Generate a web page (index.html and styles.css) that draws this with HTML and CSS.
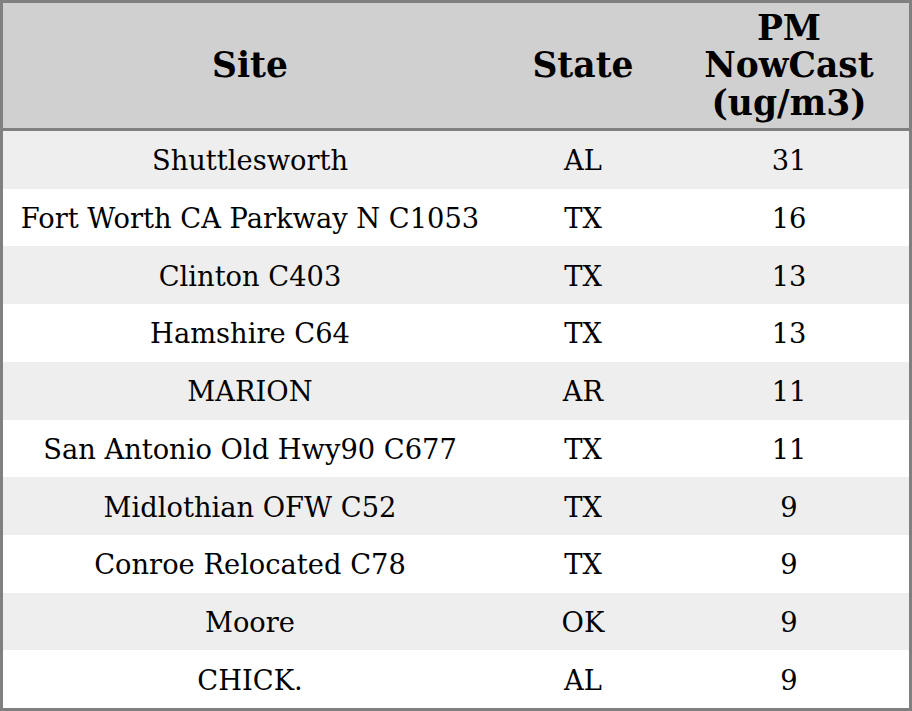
FILE: index.html
```html
<!DOCTYPE html>
<html>
<head>
<meta charset="utf-8">
<link rel="stylesheet" href="styles.css">
</head>
<body>
<div class="table">
  <div class="th">Site</div>
  <div class="th">State</div>
  <div class="th">PM<br>NowCast<br>(ug/m3)</div>

  <div class="td odd">Shuttlesworth</div><div class="td odd">AL</div><div class="td odd">31</div>
  <div class="td">Fort Worth CA Parkway N C1053</div><div class="td">TX</div><div class="td">16</div>
  <div class="td odd">Clinton C403</div><div class="td odd">TX</div><div class="td odd">13</div>
  <div class="td">Hamshire C64</div><div class="td">TX</div><div class="td">13</div>
  <div class="td odd">MARION</div><div class="td odd">AR</div><div class="td odd">11</div>
  <div class="td">San Antonio Old Hwy90 C677</div><div class="td">TX</div><div class="td">11</div>
  <div class="td odd">Midlothian OFW C52</div><div class="td odd">TX</div><div class="td odd">9</div>
  <div class="td">Conroe Relocated C78</div><div class="td">TX</div><div class="td">9</div>
  <div class="td odd">Moore</div><div class="td odd">OK</div><div class="td odd">9</div>
  <div class="td">CHICK.</div><div class="td">AL</div><div class="td">9</div>
</div>
</body>
</html>
```
FILE: styles.css
```css
html, body {
  margin: 0;
  padding: 0;
  background: #fff;
}
.table {
  box-sizing: border-box;
  width: 912px;
  height: 711px;
  border: 3px solid #808080;
  display: grid;
  grid-template-columns: 494px 172px 240px;
  grid-template-rows: 128px repeat(10, 1fr);
  font-family: "DejaVu Serif", serif;
  color: #000;
}
.th {
  box-sizing: border-box;
  background: #d0d0d0;
  border-bottom: 3px solid #808080;
  font-weight: bold;
  font-size: 34.5px;
  line-height: 37.5px;
  padding-top: 1px;
  display: flex;
  align-items: center;
  justify-content: center;
  text-align: center;
}
.td {
  display: flex;
  align-items: center;
  justify-content: center;
  font-size: 27.3px;
  padding-top: 2px;
  background: #fff;
}
.td.odd {
  background: #eeeeee;
}
```
